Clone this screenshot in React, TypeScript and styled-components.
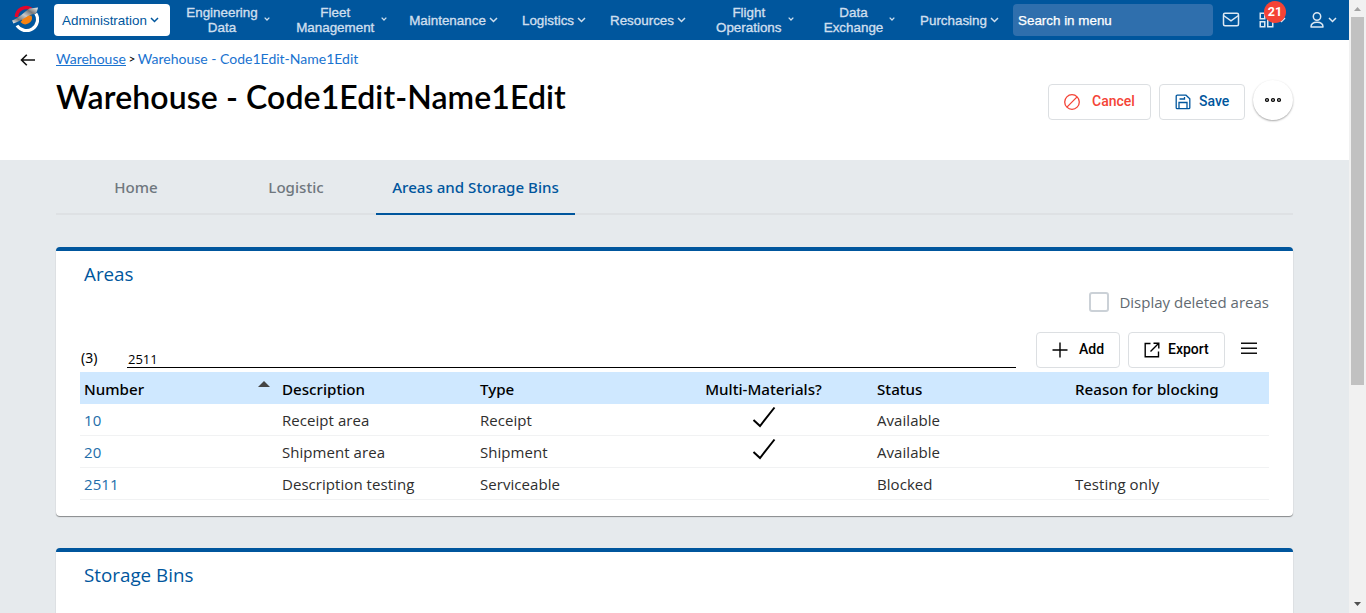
import React from 'react';
import styled, { createGlobalStyle, css } from 'styled-components';

const blue = '#00569d';

const GlobalStyle = createGlobalStyle`
  * { box-sizing: border-box; }
  html, body { margin: 0; height: 100%; overflow: hidden; }
  body { font-family: "Noto Sans", "Open Sans", sans-serif; font-size: 15px; color: #000; }
  svg { display: block; flex: none; }
`;

const Screen = styled.div`
  display: flex;
  height: 613px;
  width: 1366px;
`;

const Page = styled.div`
  display: flex;
  flex-direction: column;
  width: 1349px;
  overflow: hidden;
  background: #e6eaed;
`;

/* Navigation bar */
const NavBar = styled.nav`
  display: flex;
  align-items: center;
  flex: none;
  height: 40px;
  padding-left: 11px;
  background: ${blue};
  font-family: "Liberation Sans", Arial, sans-serif;
  font-size: 13.4px;
  line-height: 15px;
`;

const LogoBox = styled.div`
  width: 43px;
  height: 32px;
`;

const ActiveItem = styled.div`
  display: flex;
  align-items: center;
  gap: 3px;
  width: 116px;
  height: 32px;
  margin-right: 8px;
  padding-left: 8px;
  border-radius: 4px;
  background: #fff;
  color: ${blue};
`;

const NavItem = styled.div<{ $width: number }>`
  display: flex;
  align-items: center;
  width: ${(p) => p.$width}px;
  padding-left: 7px;
  color: #cfdfee;
`;

const NavLabel = styled.span<{ $width: number }>`
  width: ${(p) => p.$width}px;
  text-align: center;
  -webkit-text-stroke: 0.35px currentColor;
`;

const ChevronBox = styled.span<{ $small?: boolean }>`
  margin-left: ${(p) => (p.$small ? 5 : 2)}px;
  ${(p) => p.$small && css`padding-bottom: 2px;`}
`;

const SearchBox = styled.div`
  display: flex;
  align-items: center;
  width: 200px;
  height: 32px;
  padding-left: 5px;
  border-radius: 4px;
  background: #2f6fad;
  color: #fff;
  -webkit-text-stroke: 0.25px currentColor;
`;

const NavIcons = styled.div`
  display: flex;
  align-items: center;
  padding-left: 9px;
  color: #dce8f3;
`;

const AppsButton = styled.div`
  position: relative;
  display: flex;
  align-items: center;
  width: 34px;
  margin-left: 19px;
  gap: 3px;
`;

const Badge = styled.span`
  position: absolute;
  left: 5px;
  top: -11px;
  width: 22px;
  height: 22px;
  border-radius: 50%;
  background: #f44336;
  color: #fff;
  font: 700 12.5px/22px Roboto, sans-serif;
  text-align: center;
`;

const UserButton = styled.div`
  display: flex;
  align-items: center;
  margin-left: 17px;
  gap: 4px;
`;

/* Page heading */
const Header = styled.header`
  display: flex;
  flex: none;
  height: 120px;
  background: #fff;
`;

const BackButton = styled.div`
  width: 56px;
  padding: 13px 0 0 20px;
`;

const Heading = styled.div`
  flex: 1;
  font-family: Lato, sans-serif;
`;

const Breadcrumb = styled.div`
  display: flex;
  gap: 2.5px;
  height: 37px;
  padding-top: 10px;
  font-size: 14px;
  line-height: 18px;
`;

const CrumbLink = styled.span<{ $underlined?: boolean }>`
  color: #1a73d0;
  ${(p) => p.$underlined && css`height: 16px; border-bottom: 1px solid #1a73d0;`}
`;

const CrumbSeparator = styled.span`
  font-size: 12px;
`;

const Title = styled.h1`
  margin: 0;
  font-size: 32px;
  font-weight: 600;
  line-height: 40px;
  letter-spacing: 0.1px;
`;

const HeaderActions = styled.div`
  display: flex;
  gap: 8px;
  padding: 44px 56px 0 0;
`;

const Button = styled.button<{ $width: number; $color?: string; $gap: number }>`
  display: flex;
  align-items: center;
  gap: ${(p) => p.$gap}px;
  width: ${(p) => p.$width}px;
  height: 36px;
  padding: 0 0 0 15px;
  border: 1px solid #dcdfe2;
  border-radius: 4px;
  background: #fff;
  color: ${(p) => p.$color || '#000'};
  font: 500 14px/20px Roboto, sans-serif;
`;

const ButtonText = styled.span`
  padding-bottom: 2px;
`;

const MoreButton = styled.button`
  display: flex;
  align-items: center;
  justify-content: center;
  width: 40px;
  height: 40px;
  margin-top: -4px;
  padding: 0;
  border: 0;
  border-radius: 50%;
  background: #fff;
  box-shadow: 0 1px 2px rgba(0, 0, 0, 0.35);
`;

/* Tabs */
const Tabs = styled.div`
  display: flex;
  flex: none;
  height: 55px;
  margin: 0 56px;
  box-shadow: inset 0 -2px #dee1e4;
`;

const Tab = styled.div<{ $width: number; $active?: boolean }>`
  width: ${(p) => p.$width}px;
  padding-top: 17px;
  border-bottom: 2px solid ${(p) => (p.$active ? blue : 'transparent')};
  color: ${(p) => (p.$active ? blue : '#6f777e')};
  font-weight: 500;
  font-size: 15.1px;
  line-height: 20px;
  text-align: center;
`;

/* Cards */
const Card = styled.section<{ $height: number }>`
  flex: none;
  height: ${(p) => p.$height}px;
  margin: 32px 56px 0;
  padding: 0 24px;
  border-top: 4px solid ${blue};
  border-radius: 4px;
  background: #fff;
  box-shadow: 0 1px 1px rgba(0, 0, 0, 0.42);
`;

const CardTitle = styled.h2`
  height: 41px;
  margin: 0;
  padding: 9px 4px 0;
  color: ${blue};
  font-family: "Open Sans", sans-serif;
  font-size: 18.8px;
  font-weight: 400;
  line-height: 28px;
`;

const CheckRow = styled.label`
  display: flex;
  justify-content: flex-end;
  align-items: center;
  gap: 10px;
  height: 20px;
  color: #626a71;
  font-family: "Open Sans", sans-serif;
`;

const CheckBox = styled.span`
  width: 20px;
  height: 20px;
  border: 2px solid #cbd1d7;
  border-radius: 3px;
`;

const Toolbar = styled.div`
  display: flex;
  height: 60px;
  padding-top: 20px;
`;

const Count = styled.span`
  width: 47px;
  padding: 16px 0 0 1px;
  font-size: 14px;
  line-height: 20px;
`;

const FilterField = styled.div`
  width: 889px;
  height: 36px;
  margin-right: 20px;
  padding: 17px 0 0 1px;
  border-bottom: 1px solid #000;
  font-family: "Open Sans", sans-serif;
  font-size: 13px;
  line-height: 20px;
`;

const ToolbarActions = styled.div`
  display: flex;
  gap: 8px;
`;

const MenuButton = styled.div`
  padding: 10px 0 0 8px;
`;

const Row = styled.div<{ $head?: boolean }>`
  display: grid;
  grid-template-columns: 198px 198px 198px 199px 198px 198px;
  height: 32px;
  ${(p) =>
    p.$head
      ? css`
          background: #cfe8ff;
          font-weight: 500;
          font-size: 15.15px;
          line-height: 34px;
        `
      : css`
          border-bottom: 1px solid #f1f2f3;
          color: #2e2e2e;
          font-family: "Open Sans", sans-serif;
          letter-spacing: 0.05px;
          line-height: 33px;
        `}
`;

const Cell = styled.div<{ $link?: boolean; $center?: boolean }>`
  display: flex;
  justify-content: ${(p) => (p.$center ? 'center' : 'flex-start')};
  padding: 0 ${(p) => (p.$center ? 24 : 4)}px 0 4px;
  ${(p) => p.$link && css`color: #236da9;`}
`;

const SortMark = styled.svg`
  margin: 9px 4px 0 auto;
`;

const CheckMark = styled.svg`
  margin-top: 2px;
`;

/* Window scrollbar */
const Scrollbar = styled.div`
  display: flex;
  flex-direction: column;
  align-items: center;
  width: 17px;
  height: 613px;
  background: #f1f1f1;
`;

const ScrollArrow = styled.svg`
  margin-top: auto;
`;

const Thumb = styled.div`
  width: 13px;
  height: 368px;
  background: #c1c1c1;
`;

const Chevron = ({ small }: { small?: boolean }) => (
  <svg width={small ? 6 : 9} height={small ? 4 : 6} viewBox="0 0 9 6" fill="none" stroke="currentColor" strokeWidth={small ? 1.9 : 1.5}>
    <path d="M1 1l3.5 3.5L8 1" />
  </svg>
);

const Logo = () => (
  <svg width="28" height="28" viewBox="0 0 28 28">
    <defs>
      <linearGradient id="wing" x1="0" y1="1" x2="1" y2="0">
        <stop offset="0" stopColor="#fff" />
        <stop offset=".25" stopColor="#777" />
        <stop offset=".5" stopColor="#c8c8c8" />
        <stop offset=".72" stopColor="#777" />
        <stop offset="1" stopColor="#f4f4f4" />
      </linearGradient>
    </defs>
    <path d="M5.500 13A9.500 9.500 0 0 1 20 5" fill="none" stroke="#e2062c" strokeWidth="3.600" />
    <path d="M24.800 9.500A10.800 10.800 0 0 1 6 21.500" fill="none" stroke="#fff" strokeWidth="3.200" />
    <path d="M9.500 18A6.500 6.500 0 0 0 20.500 11.500L15 12z" fill="#f58212" />
    <circle cx="15" cy="14" r="4.500" fill="#f58212" />
    <path d="M1 16.500C8 14 13 8 18.500 4.500L27 3.500C26.500 6 25.500 9.500 24 10C17 10 13 16 2.500 19.500Z" fill="url(#wing)" />
  </svg>
);

type Menu = { label: string; width: number; text: number; small?: boolean };

const menus: Menu[] = [
  { label: 'Engineering Data', width: 110, text: 74, small: true },
  { label: 'Fleet Management', width: 113, text: 80.5, small: true },
  { label: 'Maintenance', width: 113, text: 79 },
  { label: 'Logistics', width: 88, text: 54 },
  { label: 'Resources', width: 106, text: 66 },
  { label: 'Flight Operations', width: 108, text: 67.5, small: true },
  { label: 'Data Exchange', width: 96, text: 61, small: true },
  { label: 'Purchasing', width: 101, text: 69 },
];

const columns = ['Number', 'Description', 'Type', 'Multi-Materials?', 'Status', 'Reason for blocking'];

const areas = [
  { number: '10', description: 'Receipt area', type: 'Receipt', multi: true, status: 'Available', reason: '' },
  { number: '20', description: 'Shipment area', type: 'Shipment', multi: true, status: 'Available', reason: '' },
  { number: '2511', description: 'Description testing', type: 'Serviceable', multi: false, status: 'Blocked', reason: 'Testing only' },
];

export default function App() {
  return (
    <Screen>
      <GlobalStyle />
      <Page>
        <NavBar>
          <LogoBox><Logo /></LogoBox>
          <ActiveItem>
            Administration
            <Chevron />
          </ActiveItem>
          {menus.map((m) => (
            <NavItem key={m.label} $width={m.width}>
              <NavLabel $width={m.text}>{m.label}</NavLabel>
              <ChevronBox $small={m.small}><Chevron small={m.small} /></ChevronBox>
            </NavItem>
          ))}
          <SearchBox>Search in menu</SearchBox>
          <NavIcons>
            <svg width="18" height="17" viewBox="0 0 18 17" fill="none" stroke="currentColor" strokeWidth="1.5">
              <rect x="1.500" y="1.250" width="15" height="12.500" rx="1.500" />
              <path d="M1.500 3.500L9 8.800l7.500-5.300" />
            </svg>
            <AppsButton>
              <svg width="15" height="16" viewBox="0 0 15 16" fill="none" stroke="currentColor" strokeWidth="1.500">
                <path d="M1.250 1.250h4.500v5.500h-4.500zM8.750 1.250h5v3.500h-5zM1.250 9.750h4.500v5h-4.500zM8.750 7.750h5v7h-5z" />
              </svg>
              <Chevron />
              <Badge>21</Badge>
            </AppsButton>
            <UserButton>
              <svg width="14" height="16" viewBox="0 0 14 16" fill="none" stroke="currentColor" strokeWidth="1.500">
                <circle cx="7" cy="4.500" r="3.700" />
                <path d="M1 15c0-3.200 1.800-4.800 6-4.800s6 1.600 6 4.800z" strokeLinejoin="round" />
              </svg>
              <Chevron />
            </UserButton>
          </NavIcons>
        </NavBar>

        <Header>
          <BackButton>
            <svg width="16" height="14" viewBox="0 0 16 14" fill="none" stroke="#111" strokeWidth="1.600">
              <path d="M15 7H1.500M6.800 1.700L1.500 7l5.300 5.300" />
            </svg>
          </BackButton>
          <Heading>
            <Breadcrumb>
              <CrumbLink $underlined>Warehouse</CrumbLink>
              <CrumbSeparator>&gt;</CrumbSeparator>
              <CrumbLink>Warehouse - Code1Edit-Name1Edit</CrumbLink>
            </Breadcrumb>
            <Title>Warehouse - Code1Edit-Name1Edit</Title>
          </Heading>
          <HeaderActions>
            <Button $width={103} $color="#f44336" $gap={12}>
              <svg width="16" height="16" viewBox="0 0 16 16" fill="none" stroke="currentColor" strokeWidth="1.300">
                <circle cx="8" cy="8" r="7.300" />
                <path d="M2.900 13.100L13.100 2.900" />
              </svg>
              <ButtonText>Cancel</ButtonText>
            </Button>
            <Button $width={86} $color={blue} $gap={8}>
              <svg width="16" height="16" viewBox="0 0 16 16" fill="none" stroke="currentColor" strokeWidth="1.300">
                <path d="M1.200 2.200a1 1 0 0 1 1-1H11l3.800 3.500v9a1 1 0 0 1-1 1H2.200a1 1 0 0 1-1-1z" />
                <path d="M4 15V8.500h8V15M4.500 5H9.500V3" />
              </svg>
              <ButtonText>Save</ButtonText>
            </Button>
            <MoreButton aria-label="More">
              <svg width="18" height="6" viewBox="0 0 18 6" fill="#aaa" stroke="#000" strokeWidth="1.200">
                <circle cx="3" cy="3" r="1.500" />
                <circle cx="9" cy="3" r="1.500" />
                <circle cx="15" cy="3" r="1.500" />
              </svg>
            </MoreButton>
          </HeaderActions>
        </Header>

        <Tabs>
          <Tab $width={160}>Home</Tab>
          <Tab $width={160}>Logistic</Tab>
          <Tab $width={199} $active>Areas and Storage Bins</Tab>
        </Tabs>

        <Card $height={269}>
          <CardTitle>Areas</CardTitle>
          <CheckRow>
            <CheckBox />
            Display deleted areas
          </CheckRow>
          <Toolbar>
            <Count>(3)</Count>
            <FilterField>2511</FilterField>
            <ToolbarActions>
              <Button $width={84} $gap={11}>
                <svg width="16" height="16" viewBox="0 0 16 16" fill="none" stroke="currentColor" strokeWidth="1.400">
                  <path d="M8 .5v15M.5 8h15" />
                </svg>
                <ButtonText>Add</ButtonText>
              </Button>
              <Button $width={97} $gap={8}>
                <svg width="16" height="16" viewBox="0 0 16 16" fill="none" stroke="currentColor" strokeWidth="1.400">
                  <path d="M6.500 1.500H1.200v13.300h13.300V9.500M9.500 1.200h5.300v5.300M14.500 1.500L6.500 9.500" />
                </svg>
                <ButtonText>Export</ButtonText>
              </Button>
              <MenuButton>
                <svg width="16" height="13" viewBox="0 0 16 13" stroke="#111" strokeWidth="1.500">
                  <path d="M0 1.250h16M0 6.250h16M0 11.250h16" />
                </svg>
              </MenuButton>
            </ToolbarActions>
          </Toolbar>
          <Row $head>
            {columns.map((c, i) => (
              <Cell key={c} $center={i === 3}>
                {c}
                {i === 0 && (
                  <SortMark width="12" height="6" viewBox="0 0 12 6"><path d="M0 6L6 0l6 6z" fill="#444" /></SortMark>
                )}
              </Cell>
            ))}
          </Row>
          {areas.map((a) => (
            <Row key={a.number}>
              <Cell $link>{a.number}</Cell>
              <Cell>{a.description}</Cell>
              <Cell>{a.type}</Cell>
              <Cell $center>
                {a.multi && (
                  <CheckMark width="24" height="22" viewBox="0 0 24 22" fill="none" stroke="#000" strokeWidth="2">
                    <path d="M1.500 14l6.500 6L22.500 1.500" />
                  </CheckMark>
                )}
              </Cell>
              <Cell>{a.status}</Cell>
              <Cell>{a.reason}</Cell>
            </Row>
          ))}
        </Card>

        <Card $height={200}>
          <CardTitle>Storage Bins</CardTitle>
        </Card>
      </Page>

      <Scrollbar>
        <svg width="17" height="17" viewBox="0 0 17 17"><path d="M5 11l3.500-4 3.500 4z" fill="#a3a3a3" /></svg>
        <Thumb />
        <ScrollArrow width="17" height="17" viewBox="0 0 17 17"><path d="M5 6l3.500 4L12 6z" fill="#505050" /></ScrollArrow>
      </Scrollbar>
    </Screen>
  );
}
